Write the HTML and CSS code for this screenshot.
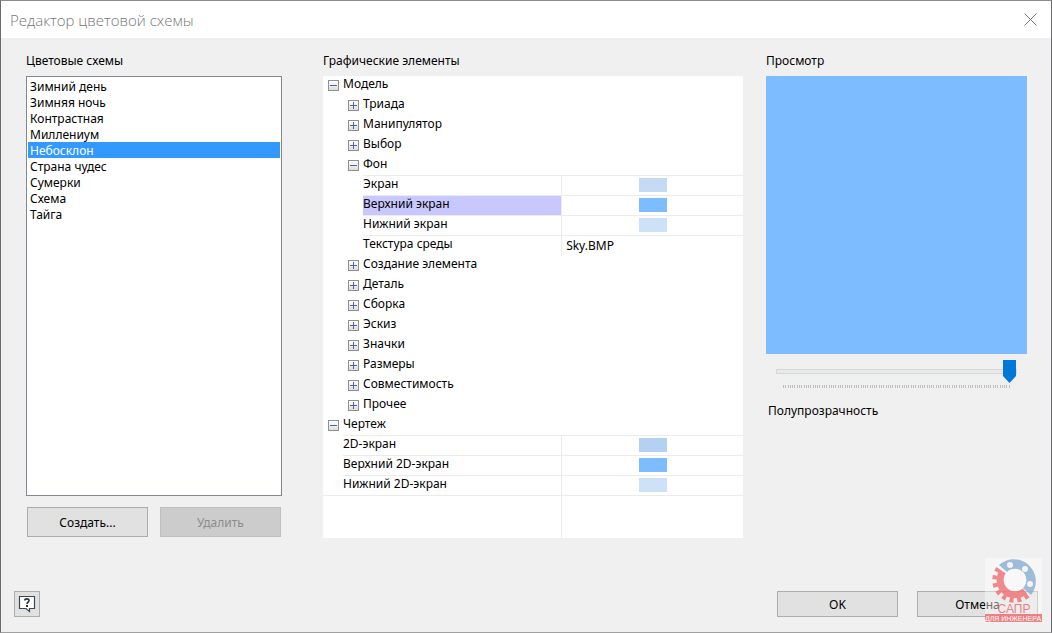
FILE: index.html
```html
<!DOCTYPE html>
<html lang="ru">

<head>
    <meta charset="UTF-8">
    <meta name="viewport" content="width=device-width, initial-scale=1.0">
    <title>Редактор цветовой схемы</title>
    <link rel="stylesheet" href="styles.css">
</head>

<body>
    <section class="dialog">
        <!-- Title bar -->
        <header class="titlebar">
            <h1 class="title">Редактор цветовой схемы</h1>
            <button class="close" aria-label="Закрыть">
                <svg width="13" height="13" viewBox="0 0 13 13">
                    <path d="M0.5 0.5L12.5 12.5M12.5 0.5L0.5 12.5" stroke="#777" fill="none" />
                </svg>
            </button>
        </header>

        <main class="content">
            <!-- List of colour schemes -->
            <div class="schemes">
                <label class="caption" for="schemes">Цветовые схемы</label>
                <select class="list" id="schemes" size="26">
                    <option>Зимний день</option>
                    <option>Зимняя ночь</option>
                    <option>Контрастная</option>
                    <option>Миллениум</option>
                    <option selected>Небосклон</option>
                    <option>Страна чудес</option>
                    <option>Сумерки</option>
                    <option>Схема</option>
                    <option>Тайга</option>
                </select>
                <div class="list-buttons">
                    <button class="btn">Создать...</button>
                    <button class="btn" disabled>Удалить</button>
                </div>
            </div>

            <!-- Tree of graphic elements -->
            <div class="elements">
                <h2 class="caption" id="elements">Графические элементы</h2>
                <table class="tree" aria-labelledby="elements">
                    <colgroup>
                        <col class="col-name">
                        <col>
                    </colgroup>
                    <tbody>
                        <tr><td colspan="2"><div class="node"><button class="toggle open" aria-label="Свернуть"></button>Модель</div></td></tr>
                        <tr><td colspan="2"><div class="node sub"><button class="toggle" aria-label="Развернуть"></button>Триада</div></td></tr>
                        <tr><td colspan="2"><div class="node sub"><button class="toggle" aria-label="Развернуть"></button>Манипулятор</div></td></tr>
                        <tr><td colspan="2"><div class="node sub"><button class="toggle" aria-label="Развернуть"></button>Выбор</div></td></tr>
                        <tr><td colspan="2"><div class="node sub"><button class="toggle open" aria-label="Свернуть"></button><span class="line">Фон</span></div></td></tr>
                        <tr>
                            <td class="name sub"><div class="line">Экран</div></td>
                            <td class="value"><button class="swatch screen" aria-label="Экран"></button></td>
                        </tr>
                        <tr>
                            <td class="name sub"><div class="line selected">Верхний экран</div></td>
                            <td class="value"><button class="swatch top" aria-label="Верхний экран"></button></td>
                        </tr>
                        <tr>
                            <td class="name sub"><div class="line">Нижний экран</div></td>
                            <td class="value"><button class="swatch bottom" aria-label="Нижний экран"></button></td>
                        </tr>
                        <tr>
                            <td class="name sub"><div>Текстура среды</div></td>
                            <td class="value text">Sky.BMP</td>
                        </tr>
                        <tr><td colspan="2"><div class="node sub"><button class="toggle" aria-label="Развернуть"></button>Создание элемента</div></td></tr>
                        <tr><td colspan="2"><div class="node sub"><button class="toggle" aria-label="Развернуть"></button>Деталь</div></td></tr>
                        <tr><td colspan="2"><div class="node sub"><button class="toggle" aria-label="Развернуть"></button>Сборка</div></td></tr>
                        <tr><td colspan="2"><div class="node sub"><button class="toggle" aria-label="Развернуть"></button>Эскиз</div></td></tr>
                        <tr><td colspan="2"><div class="node sub"><button class="toggle" aria-label="Развернуть"></button>Значки</div></td></tr>
                        <tr><td colspan="2"><div class="node sub"><button class="toggle" aria-label="Развернуть"></button>Размеры</div></td></tr>
                        <tr><td colspan="2"><div class="node sub"><button class="toggle" aria-label="Развернуть"></button>Совместимость</div></td></tr>
                        <tr><td colspan="2"><div class="node sub"><button class="toggle" aria-label="Развернуть"></button>Прочее</div></td></tr>
                        <tr><td colspan="2"><div class="node"><button class="toggle open" aria-label="Свернуть"></button><span class="line">Чертеж</span></div></td></tr>
                        <tr>
                            <td class="name"><div class="line">2D-экран</div></td>
                            <td class="value"><button class="swatch screen-2d" aria-label="2D-экран"></button></td>
                        </tr>
                        <tr>
                            <td class="name"><div class="line">Верхний 2D-экран</div></td>
                            <td class="value"><button class="swatch top" aria-label="Верхний 2D-экран"></button></td>
                        </tr>
                        <tr class="last">
                            <td class="name"><div>Нижний 2D-экран</div></td>
                            <td class="value"><button class="swatch bottom" aria-label="Нижний 2D-экран"></button></td>
                        </tr>
                        <tr class="filler">
                            <td></td>
                            <td class="value"></td>
                        </tr>
                    </tbody>
                </table>
            </div>

            <!-- Preview and transparency -->
            <div class="preview">
                <h2 class="caption">Просмотр</h2>
                <div class="screen-preview"></div>
                <div class="slider">
                    <input type="range" id="opacity" min="0" max="100" value="100">
                    <div class="ticks"></div>
                </div>
                <label class="slider-label" for="opacity">Полупрозрачность</label>
            </div>
        </main>

        <footer class="footer">
            <button class="help" aria-label="Справка">
                <svg width="18" height="18" viewBox="0 0 18 18">
                    <path d="M1.5 1.5H16.5V13.5H11.5V16.5L8 13.5H1.5Z" fill="#fff" stroke="#3d4654" stroke-width="1.2" />
                    <path d="M6.8 5.4C6.8 3.4 11 3.2 11 5.5C11 7.2 9 7.2 9 9" fill="none" stroke="#2c3442" stroke-width="1.6" />
                    <rect x="8" y="10" width="2" height="2" fill="#2c3442" />
                </svg>
            </button>
            <button class="btn">OK</button>
            <button class="btn">Отмена</button>
        </footer>

        <!-- Logo over the corner of the dialog -->
        <svg class="logo" width="57" height="65" viewBox="0 0 57 65">
            <rect width="57" height="65" fill="#fff" opacity="0.5" />
            <!-- flange -->
            <path d="M14 7A22 22 0 0 1 46 37L38 30A11 11 0 0 0 22 14Z" fill="#8fb3d6" />
            <g fill="#f4f6f8">
                <circle cx="25" cy="7" r="3" />
                <circle cx="40" cy="11" r="3" />
                <circle cx="45" cy="26" r="3" />
            </g>
            <!-- gear -->
            <g fill="none" stroke="#f0787c">
                <path d="M17.7 13.4A15 15 0 0 0 40 33.1" stroke-width="7" />
                <path d="M13.6 10.5A20 20 0 0 0 43.4 36.9" stroke-width="5" stroke-dasharray="4 3.7" />
            </g>
            <circle cx="30" cy="22" r="11" fill="#fafafa" />
            <text x="29" y="55" class="logo-name">САПР</text>
            <rect y="56" width="57" height="8" fill="#ee6f73" />
            <text x="28" y="63" class="logo-note">ДЛЯ ИНЖЕНЕРА</text>
        </svg>
    </section>
</body>

</html>
```
FILE: styles.css
```css
/* Applies to the whole document */
* {
    box-sizing: border-box;
    margin: 0;
    padding: 0;
}

body,
button,
select {
    font-family: "Noto Sans", "Open Sans", sans-serif;
    font-size: 12px;
    line-height: 16px;
    color: #000;
}

/* Dialog window */
.dialog {
    position: relative;
    display: flex;
    flex-direction: column;
    min-height: 100vh;
    background: #f0f0f0;
    border: 1px solid #707074;
    border-color: #8c8c8e #6a6a70 #a0a0a0 #6a6a70;
}

.titlebar {
    display: flex;
    align-items: center;
    justify-content: space-between;
    height: 37px;
    padding: 0 14px 0 9px;
    background: #fff;
}

.title {
    font-family: "Open Sans", "Noto Sans", sans-serif;
    font-size: 15px;
    font-weight: 300;
    line-height: 20px;
    color: #777;
}

.close {
    display: flex;
    border: none;
    background: transparent;
}

/* Three columns */
.content {
    display: flex;
    padding: 15px 24px 0 25px;
}

.schemes {
    display: flex;
    flex-direction: column;
    flex: 256 1 0;
    margin-right: 41px;
}

.elements {
    flex: 420 1 0;
    margin-right: 23px;
}

.preview {
    flex: 261 1 0;
}

.caption {
    display: block;
    height: 23px;
    font-size: 12px;
    font-weight: normal;
}

/* Colour schemes */
.list {
    height: 420px;
    padding: 1px;
    border: 1px solid #828790;
    border-radius: 0;
    background: #fff;
    outline: none;
    overflow: hidden;
}

.list option {
    height: 16px;
    padding: 0 2px;
}

.list option:checked {
    background: linear-gradient(#3399ff, #3399ff);
    color: #fff;
    -webkit-text-fill-color: #fff;
}

.list-buttons {
    display: flex;
    gap: 12px;
    margin-top: 11px;
    padding: 0 1px;
}

.list-buttons .btn {
    flex: 1;
    height: 30px;
}

.btn {
    width: 121px;
    height: 26px;
    padding-top: 1px;
    border: 1px solid #adadad;
    background: #e1e1e1;
}

.btn:disabled {
    border-color: #bfbfbf;
    background: #ccc;
    color: #8c8c8c;
}

/* Tree */
.tree {
    width: 100%;
    table-layout: fixed;
    border-collapse: separate;
    border-spacing: 0;
    background: #fff;
}

.col-name {
    width: 56.7%;
}

.tree tr {
    height: 20px;
}

.tree td {
    vertical-align: top;
}

.node {
    display: flex;
    height: 20px;
    padding-left: 5px;
}

.node.sub {
    padding-left: 25px;
}

.node .line {
    flex: 1;
}

.name {
    padding-left: 20px;
}

.name.sub {
    padding-left: 40px;
}

.line {
    height: 20px;
    border-bottom: 1px solid #ececec;
}

.line.selected {
    background: #c8c8ff;
}

.toggle {
    width: 11px;
    height: 11px;
    margin: 4px 4px 0 0;
    border: 1px solid #8f8f8f;
    background:
        linear-gradient(#4b63a7, #4b63a7) center / 7px 1px no-repeat,
        linear-gradient(#4b63a7, #4b63a7) center / 1px 7px no-repeat,
        linear-gradient(#fff, #ddd);
}

.toggle.open {
    background:
        linear-gradient(#4b63a7, #4b63a7) center / 7px 1px no-repeat,
        linear-gradient(#fff, #ddd);
}

.value {
    border-left: 1px solid #ececec;
    border-bottom: 1px solid #ececec;
}

.value.text {
    padding-left: 4px;
    border-bottom: none;
    line-height: 20px;
}

.swatch {
    display: block;
    width: 28px;
    height: 14px;
    margin: 2px auto 0;
    border: none;
}

.swatch.screen {
    background: #c3dbf3;
}

.swatch.screen-2d {
    background: #b4d1f2;
}

.swatch.top {
    background: #7dbcff;
}

.swatch.bottom {
    background: #cde2f7;
}

.last td {
    border-bottom: 1px solid #ececec;
}

.tree .filler {
    height: 42px;
}

.filler .value {
    border-bottom: none;
}

/* Preview */
.screen-preview {
    height: 278px;
    background: #7dbcff;
}

.slider {
    padding: 6px 10px 0 10px;
}

.slider input {
    display: block;
    width: 100%;
    height: 23px;
    appearance: none;
    background: transparent;
}

.slider input::-webkit-slider-runnable-track {
    height: 5px;
    border: 1px solid #d6d6d6;
    background: #e7eaea;
}

.slider input::-webkit-slider-thumb {
    appearance: none;
    width: 13px;
    height: 23px;
    margin-top: -10px;
    background: #0078d7;
    clip-path: polygon(0 0, 100% 0, 100% 70%, 50% 100%, 0 70%);
}

.ticks {
    height: 3px;
    margin: 2px 6px 0 7px;
    background: repeating-linear-gradient(to right, #c0c0c0 0 1px, transparent 1px calc(100% / 100));
}

.slider-label {
    display: block;
    margin-top: 15px;
    padding-left: 2px;
}

/* Bottom buttons */
.footer {
    display: flex;
    gap: 19px;
    margin-top: auto;
    padding: 0 13px 15px;
}

.help {
    display: flex;
    align-items: center;
    justify-content: center;
    width: 26px;
    height: 26px;
    margin-right: auto;
    border: 1px solid #adadad;
    background: #e1e1e1;
}

/* Logo */
.logo {
    position: absolute;
    right: 9px;
    bottom: 9px;
    opacity: 0.85;
}

.logo text {
    font-family: "Liberation Sans", sans-serif;
    text-anchor: middle;
}

.logo-name {
    font-size: 12px;
    fill: #ee6f73;
}

.logo-note {
    font-size: 7px;
    fill: #fff;
}
```
